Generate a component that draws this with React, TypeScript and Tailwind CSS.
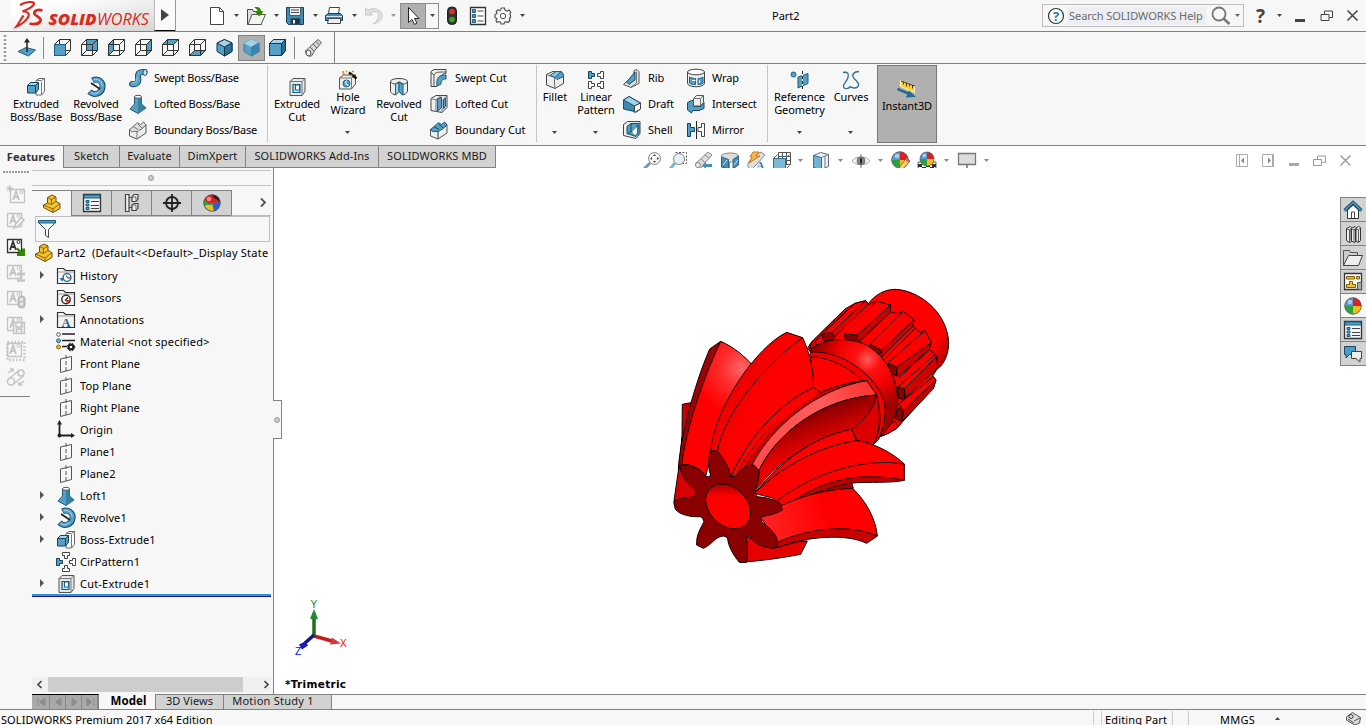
import React from "react";

type Kids = { children?: React.ReactNode };
type IconProps = Kids & { w?: number; h?: number; className?: string };

const K = "#444b50";
const B = "#559fc6";
const D = "#1c5f86";
const L = "#a5d3ea";

function I({ w = 20, h = 20, className = "", children }: IconProps) {
  return (
    <svg width={w} height={h} viewBox={`0 0 ${w} ${h}`} className={`shrink-0 overflow-visible ${className}`} fill="none" stroke={K} strokeWidth="1">
      {children}
    </svg>
  );
}

function Caret({ c = "#444" }: { c?: string }) {
  return (
    <svg width="5" height="3" viewBox="0 0 5 3" className="shrink-0">
      <path d="M0 0h5L2.500 3z" fill={c} />
    </svg>
  );
}

function Logo() {
  return (
    <svg width="143" height="31" viewBox="0 0 143 31">
      <defs>
        <linearGradient id="lg" x1="0" y1="0" x2="1" y2="1">
          <stop offset="0.2" stopColor="#fff" />
          <stop offset="1" stopColor="#d6d6d6" />
        </linearGradient>
      </defs>
      <rect width="143" height="31" fill="url(#lg)" />
      <g fill="none" stroke="#da291c" strokeWidth="2.100">
        <path d="M9 5C14 2 24 .5 23 4C21.500 7 15.500 10 11.500 11.500C17 11 19.500 14 16.500 18C14 22 9 25 5.500 26.500C8.500 22.500 10 18.500 12.500 15.500" />
        <path d="M31.500 10.500C26.500 9 22.500 11 23.500 14C25.500 16.500 31 18 29.500 21C27.500 24.500 22.500 24.500 18.500 23.500" strokeWidth="2.700" />
      </g>
      <text x="37.500" y="25" fontFamily="Open Sans, sans-serif" fontSize="15.500" fontStyle="italic" fontWeight="800" fill="#da291c" textLength="48" lengthAdjust="spacingAndGlyphs">SOLID</text>
      <text x="86" y="25" fontFamily="Open Sans, sans-serif" fontSize="15.500" fontStyle="italic" fontWeight="400" fill="#da291c" textLength="52" lengthAdjust="spacingAndGlyphs">WORKS</text>
    </svg>
  );
}

function Cube({ face }: { face: number }) {
  const faces = [
    "M1.500 6.500h11v11h-11z",
    "M6.500 1.500h11v11h-11z",
    "M1.500 6.500l5-5v11l-5 5z",
    "M12.500 6.500l5-5v11l-5 5z",
    "M1.500 6.500l5-5h11l-5 5z",
    "M1.500 17.500l5-5h11l-5 5z",
  ];
  return (
    <I w={19} h={19}>
      <path d={faces[face]} fill={B} stroke={D} />
      <path d="M1.500 6.500h11v11h-11zM6.500 1.500h11v11h-11zM1.500 6.500l5-5M12.500 6.500l5-5M12.500 17.500l5-5M1.500 17.500l5-5" stroke="#333" />
      {face === 0 && <path d="M1.500 6.500h11v11h-11z" fill={B} stroke={D} />}
    </I>
  );
}

function IsoCube({ r = 0 }: { r?: number }) {
  return r === 2 ? (
    <I w={19} h={19}>
      <path d="M1.500 5.500l4-4h12v11l-4 5h-12z" fill={B} stroke="#17374a" />
      <path d="M1.500 5.500l4-4h12l-4 4z" fill={L} stroke="#17374a" />
      <path d="M13.500 5.500l4-4v11l-4 5z" fill="#2b7199" stroke="#17374a" />
    </I>
  ) : (
    <I w={19} h={19}>
      <path d="M2 5l7.500-3.500L17 5v8.500L9.500 18 2 13.500z" fill={B} stroke={r ? "#3f7c9d" : "#17374a"} />
      <path d="M2 5l7.500-3.500L17 5 9.500 9z" fill={L} stroke={r ? "#8cc3df" : "#17374a"} />
      <path d="M9.500 9L17 5v8.500L9.500 18z" fill={r ? "#3b84ab" : "#2b7199"} stroke={r ? "#3b84ab" : "#17374a"} />
    </I>
  );
}

const ExtrudeIcon = () => (
  <I>
    <path d="M10 3.500l3-2h5.500v13l-3 3.500H10z" fill="#fff" stroke="#666" />
    <path d="M15.500 4.500v13.500M10 3.500h5.500l3-2" stroke="#777" />
    <path d="M1.500 8.500l3-3h8v7l-3 3.500h-8z" fill={B} stroke="#17435e" />
    <path d="M1.500 8.500l3-3h8l-3 3z" fill={L} stroke="#17435e" />
    <path d="M9.500 8.500V16" stroke="#17435e" />
  </I>
);
const RevolveIcon = () => (
  <I>
    <path d="M6.500 3.500C12 .5 17.500 5 16.500 10.500C15.500 17 8 19 3.500 14.500" stroke="#1c4d68" strokeWidth="6" />
    <path d="M7 3.500C12 1 17 5 16.300 10.500C15.300 16.500 8 18.500 4 15" stroke="#559fc6" strokeWidth="4.200" />
    <path d="M8 2.500C13 1.500 16.500 5 16 9M5 15.500C8 18 12 16.500 14 14" stroke={L} strokeWidth="1" />
    <path d="M5 6l9 6" stroke="#222" strokeWidth="1.600" />
  </I>
);
const LoftIcon = () => (
  <I>
    <path d="M6.500 3v7L2 15l8 4.500L18 14l-4.500-4V3z" fill={B} stroke="#295a75" />
    <path d="M10 4v15l8-5-4.500-4V3z" fill="#37809f" stroke="none" />
    <ellipse cx="10" cy="2.800" rx="3.500" ry="1.500" fill="#fff" stroke="#555" />
  </I>
);
const SweptIcon = () => (
  <I>
    <path d="M4 16c6 1 7-3 6-6.500C9.500 5 12 3.500 16.500 4" stroke="#1f4f69" strokeWidth="6" strokeLinecap="round" />
    <path d="M4 16c6 1 7-3 6-6.500C9.500 5 12 3.500 16.500 4" stroke="#59a7cd" strokeWidth="4" strokeLinecap="round" />
    <ellipse cx="17" cy="4.500" rx="2" ry="3" fill="#c6e4f2" stroke="#1f4f69" />
    <path d="M4 14.500c4 .5 5-2 4.500-5" stroke={L} />
  </I>
);
const BoundaryIcon = ({ blue = false }: { blue?: boolean }) => (
  <I>
    <path d="M1.500 9.500c3 1 4-1 7-.5s5-1 6-4c1-1 2.500-1 3.500 0v8l-9 6-7.500-3z" fill="#eee" stroke="#555" />
    <path d="M1.500 9.500L7 5c1-2 3-3 4.500-1s2.500-1.500 4-2l2.500 3-5 4.500c-2 0-3 3-5 2-2-.5-4 1.500-6.500-2z" fill={blue ? B : "#ddd"} stroke={blue ? "#174b68" : "#666"} />
    <path d="M9 11.500V19M5 6.500l5 3M10 4l4 4" stroke={blue ? "#174b68" : "#777"} />
  </I>
);
const CutIcon = () => (
  <I>
    <path d="M3 4.500l3-3h12v13l-3 4H3z" fill="#e6e6e6" stroke="#555" />
    <path d="M3 4.500h12l3-3M15 4.500v14" stroke="#777" />
    <path d="M6 7.500h7v8H6z" fill="#b8dced" stroke={D} strokeWidth="1.200" />
    <path d="M8.500 8h4v5h-4z" fill="#fff" stroke={D} />
  </I>
);
const HoleIcon = () => (
  <I>
    <path d="M1.500 8l4-3h12v9l-4 5h-12z" fill="#eee" stroke="#555" />
    <path d="M1.500 8h12v11M13.500 8l4-3" stroke="#777" />
    <circle cx="8.500" cy="13.500" r="3.500" fill={B} stroke={D} />
    <path d="M8.500 10.500a3 3 0 0 0 2 5" stroke="#fff" />
    <path d="M11 2.500l7.500 6" stroke="#111" strokeWidth="2.600" />
    <path d="M4 2h2M8.500.5v2M14 1.500h2M12.500 5l2 .5M4.500 4.500l2-1" stroke="#d48e22" strokeWidth="1.400" />
  </I>
);
const RevCutIcon = () => (
  <I>
    <path d="M1.500 4.500c0-4 17-4 17 0v10c-1 2-3 3-5 3.500L10 14l-3.500 4c-2-.5-4-1.500-5-3.500z" fill="#eee" stroke="#444" />
    <path d="M10 5v9.500L6.500 18V7z" fill={L} stroke={D} />
    <path d="M10 5v9.500l4 3.500V7z" fill={B} stroke={D} />
    <path d="M1.500 4.500c1 2 3 2.500 5 2.500L10 5l4 2c2 0 4-.5 4.500-2.500" />
  </I>
);
const SweptCutIcon = () => (
  <I>
    <path d="M2 3.500l3-2h12v4c-5 0-6 4-6 9l-3 4H2z" fill="#eee" stroke="#444" />
    <path d="M5 18V7c1-3 4-3 12-3M5 7l-3-2.500" stroke="#555" />
    <path d="M8 18c-1-9 2-11 9-11v4c-4 0-5 2-5 5z" fill={B} stroke={D} />
  </I>
);
const LoftCutIcon = () => (
  <I>
    <path d="M2 4.500l5-3h11v12l-5 5-11-2z" fill="#eee" stroke="#444" />
    <path d="M2 4.500l5 1.500v11.500M7 6l5-4.500M13 6.500v12M13 6.500l5-5" stroke="#777" />
    <path d="M8.500 5l4-2v10.500l-4 4zM14.500 6l2-2v8l-2 3z" fill={B} stroke={D} />
  </I>
);
const FilletIcon = () => (
  <I>
    <path d="M1.500 4.500L8 1.500h8c1.500 1 2.500 3 2.500 5v7L10 18.500l-8.500-3.500z" fill="#eee" stroke="#444" />
    <path d="M1.500 4.500L10 7.500c-1 3-.5 7 0 11" stroke="#666" />
    <path d="M10 7.500L15 1.500c2.500.5 3.500 3 3.500 5L12 9.500z" fill={B} stroke={D} />
    <path d="M5 5.500L11 1.500h5l-6 6z" fill="#8cc6e2" stroke={D} />
  </I>
);
const teeD = "M.5.5h3v2h3v3h-3v2h-3z";
const teeRD = "M6.500.5h-3v2h-3v3h3v2h3z";
function Tee({ x, y, blue = false, right = false }: { x: number; y: number; blue?: boolean; right?: boolean }) {
  return <path transform={`translate(${x} ${y})`} d={right ? teeRD : teeD} fill={blue ? B : "#fff"} stroke={blue ? "#15425d" : "#444"} />;
}
const LinearIcon = () => (
  <I>
    <Tee x={2} y={1} blue />
    <Tee x={11} y={1} right />
    <Tee x={2} y={11} />
    <Tee x={11} y={11} right />
  </I>
);
const RibIcon = () => (
  <I>
    <path d="M12 2.500l3-1 2 2v12l-8 4-7.500-3 3-3 7.500-3z" fill="#e6e6e6" stroke="#555" />
    <path d="M4.500 14l8.500-10v8l-6 4.500z" fill={B} stroke="#174b68" />
    <path d="M14.500 3.500V15l-5.500 4" stroke="#777" />
  </I>
);
const DraftIcon = () => (
  <I>
    <path d="M1.500 6L7 2.500 18.500 9v6l-4 3-13-3z" fill="#3c88b0" stroke="#174b68" />
    <path d="M1.500 6L7 2.500 18.500 9l-6 3z" fill={L} stroke="#174b68" />
    <path d="M12.500 12l6-3v6l-6 3.500z" fill="#fff" stroke="#444" />
  </I>
);
const ShellIcon = () => (
  <I>
    <path d="M1.500 4.500l4-3H18v12l-4 5-12.500-3z" fill="#eee" stroke="#444" />
    <path d="M5 6.500l4-3h8v10l-3 3-9-3z" fill={B} stroke="#174b68" />
    <path d="M9 3.500v8l-4 2.500M9 11.500l6 2V5" stroke="#174b68" />
    <path d="M10 12l5-5v6l-2 2z" fill="#fff" stroke="none" />
  </I>
);
const WrapIcon = () => (
  <I>
    <path d="M1.500 4v11c0 5 17 5 17 0V4" fill="#eee" stroke="#444" />
    <ellipse cx="10" cy="4" rx="8.500" ry="2.800" fill="#fff" stroke="#444" />
    <path d="M3.500 9c3 1.500 5 1.500 6 1.500v6c-3 0-5-.5-6-1.500zM12 10.500c2 0 4-.5 5-1.500v6c-1 1-3 1.500-5 1.500z" fill={B} stroke={D} />
    <path d="M6 12.500h3.500M13.500 12v3" stroke="#fff" />
  </I>
);
const IntersectIcon = () => (
  <I>
    <path d="M1.500 8.500l4-2H8v6h7l3-4v6l-5 2h-6l-1.500 2.500-4-3z" fill={B} stroke="#174b68" />
    <path d="M7.500 4.500l3-3h7v7l-3 3.500h-7z" fill="#eee" stroke="#555" />
    <path d="M7.500 4.500h7V12M14.500 4.500l3-3" stroke="#777" />
  </I>
);
const MirrorIcon = () => (
  <I>
    <path d="M1.500 3.500h3v4h4v4h-4v5h-3z" fill={B} stroke="#17435e" />
    <path d="M18.500 3.500h-3v4h-3.500v4h3.500v5h3z" fill="#fff" stroke="#444" />
    <path d="M10.500 1v18" stroke="#222" />
  </I>
);
const RefGeoIcon = () => (
  <I>
    <circle cx="3.500" cy="4.500" r="2.500" fill={B} stroke={D} />
    <path d="M8 7l10-3.500v10L8 18z" fill={B} stroke={D} />
    <path d="M12.500 1v19" stroke="#fff" />
    <path d="M12.500 1v19" stroke="#222" strokeDasharray="3 2" />
  </I>
);
const CurvesIcon = () => (
  <I>
    <path d="M2 2.500c5-1 6 1 5 5s-5 6-4.500 9 5 2.500 7 0M18 1.500c-5 0-8 3-5 7 3 3 6 5 4 8-1.500 1.500-5 2.500-7.500 0" stroke="#2a7099" strokeWidth="1.300" />
  </I>
);
const InstantIcon = () => (
  <I w={22} h={22}>
    <path d="M4.500 2.500l14 5v7l-14-6z" fill="#ffd02e" stroke="#fff3b5" />
    <path d="M5 3l14 5M7.500 4v2.500M10.500 5v3.500M13.500 6v2.500M16.500 7v3.500" stroke="#333" />
    <path d="M1.500 11l12 5" stroke="#246b95" strokeWidth="2.500" />
    <path d="M13 12.500l7 6.500-10 .5z" fill="#246b95" stroke="none" />
  </I>
);

function Big({ icon, lines, low = false, arrow = false, className }: { icon: React.ReactNode; lines: string[]; low?: boolean; arrow?: boolean; className: string }) {
  return (
    <div className={`flex h-[78px] flex-col items-center text-center ${low ? "pt-[13px]" : "pt-[6px]"} ${className}`}>
      <div className="flex h-5 items-center">{icon}</div>
      <div className="flex h-[27px] flex-col leading-[13px] whitespace-nowrap">
        {lines.map((l) => (
          <span key={l}>{l}</span>
        ))}
      </div>
      {arrow && <div className="pt-[14px] pr-px"><Caret /></div>}
    </div>
  );
}

function Stack({ items, className }: { items: [React.ReactNode, string][]; className: string }) {
  return (
    <div className={`flex flex-col ${className}`}>
      {items.map(([ic, t]) => (
        <div key={t} className="flex h-[26px] items-center gap-[6px] whitespace-nowrap">
          {ic}
          <span>{t}</span>
        </div>
      ))}
    </div>
  );
}

const PartIcon = () => (
  <I>
    <path d="M1.500 11l4-2V3.500l4.500-2.500 4 2v4.500l4 2v5L11 18.500l-9.500-5z" fill="#f4c22b" stroke="#6b4d0d" />
    <path d="M5.500 3.500l4 2L14 3M9.500 5.500v5l4.500-3M1.500 11l9.500 4 7-5.500M11 15v3.500M5.500 9l4 1.500" stroke="#8a6510" />
  </I>
);
const ListIcon = () => (
  <I>
    <path d="M1.500 1.500h17v17h-17z" fill="#f4f4f4" stroke="#333" strokeWidth="1.300" />
    <path d="M2 2h16v3H2z" fill={B} stroke={D} />
    <path d="M4 7.500h3v2H4zM4 11h3v2H4zM4 14.500h3v2H4z" fill={B} stroke={D} />
    <path d="M9 8.500h8M9 12.500h8M9 15.500h8" stroke="#444" />
  </I>
);
const ConfigIcon = () => (
  <I>
    <path d="M3.500 1.500h3.500v17H3.500zM7 4.500h4M7 14.500h4" fill="#eee" stroke="#444" strokeWidth="1.200" />
    <path d="M10 4l2-2.500h4V6l-2 2.500h-4zM10 12l2-1.500h4V15l-2 2.500h-4z" fill="#eee" stroke="#444" strokeWidth="1.200" />
    <path d="M10 4h4v4M10 12h4v5" stroke="#666" />
  </I>
);
const TargetIcon = () => (
  <I>
    <circle cx="10" cy="10" r="6" stroke="#222" strokeWidth="1.800" />
    <path d="M10 1v18M1 10h18" stroke="#222" strokeWidth="1.800" />
  </I>
);
function Ball({ eye = false }: { eye?: boolean }) {
  return (
    <g stroke="none">
      <circle cx="10" cy="10" r="8.300" fill="#2aa13a" />
      <path d="M10 10V1.700A8.300 8.300 0 0 1 18.300 10z" fill="#d92222" />
      <path d="M10 10V1.700A8.300 8.300 0 0 0 1.700 10z" fill={eye ? "#e01f1f" : "#5d95d6"} />
      <path d="M10 10v8.300A8.300 8.300 0 0 0 18.300 10z" fill="#f0bd20" />
      {eye && <path d="M2 7l8 5v6.300C4 18 1 13 2 7z" fill="#2aa13a" />}
      {eye && <path d="M3 12l7 0 3 6C8 19 4 16 3 12z" fill="#f0bd20" />}
      {eye && <path d="M10 10l8-1c1 5-3 9-6 9.200z" fill="#2b63c8" />}
      {eye && <path d="M10 1.700C15 1.500 18 5 18.300 9L11 4z" fill="#2b1717" />}
      <circle cx="7" cy="6" r="2.300" fill="#fff" opacity=".5" />
      <circle cx="10" cy="10" r="8.300" fill="none" stroke="#555" strokeWidth=".8" />
    </g>
  );
}
const BallIcon = ({ eye = false }: { eye?: boolean }) => (
  <I>
    <Ball eye={eye} />
  </I>
);

const folder = <path d="M1.500 17.500v-15h6l2 2h9v13z" fill="#f3f3f3" stroke="#333" strokeWidth="1.200" />;
const PlaneIcon = () => (
  <I>
    <path d="M4.500 5l11-2.500v13l-11 3z" stroke="#555" />
    <path d="M10 1v18" stroke="#555" strokeDasharray="4 2" />
  </I>
);
const HistoryIcon = () => (
  <I>
    {folder}
    <path d="M2 6h16" stroke="#999" />
    <circle cx="11" cy="11.500" r="3.900" fill="#fff" stroke="#2b7298" strokeWidth="1.500" />
    <path d="M10.500 9.500l1 2.500h3" stroke="#333" />
    <path d="M3.500 12h5L6 15.500z" fill="#2b7298" stroke="none" />
  </I>
);
const SensorIcon = () => (
  <I>
    {folder}
    <path d="M2 6h16" stroke="#999" />
    <circle cx="10" cy="11.500" r="4.200" fill="#fff" stroke="#333" strokeWidth="1.500" />
    <path d="M9 12.500l3-3" stroke="#222" strokeWidth="1.300" />
    <path d="M10 12h3.500a3.500 3.500 0 0 1-3 3z" fill="#dc2a1c" stroke="none" />
  </I>
);
const AnnoIcon = () => (
  <I>
    {folder}
    <path d="M2 6h16" stroke="#999" />
    <text x="10" y="16.500" textAnchor="middle" fontFamily="Liberation Serif, serif" fontWeight="700" fontSize="12.500" fill="#1c6390" stroke="none">A</text>
  </I>
);
const MaterialIcon = () => (
  <I>
    <path d="M6 2h13M6 8.500h13M6 14.500h5" stroke="#222" strokeWidth="1.600" />
    <circle cx="2.500" cy="2.500" r="1.800" fill="#fff" stroke="#555" />
    <circle cx="2.500" cy="8.800" r="2" fill="#6db4d8" stroke="#30688a" />
    <circle cx="2.500" cy="15" r="2" fill="#f0b92a" stroke="#8f6b12" />
    <circle cx="15" cy="15" r="2.400" stroke="#222" strokeWidth="2.200" />
    <circle cx="15" cy="15" r="3.800" stroke="#222" strokeWidth="1" strokeDasharray="1.600 1.500" />
  </I>
);
const OriginIcon = () => (
  <I>
    <path d="M3.500 3v12.500H16" stroke="#222" strokeWidth="1.800" />
    <path d="M3.500 0L6 4.500H1zM19 15.500l-4-2.500v5z" fill="#222" stroke="none" />
    <circle cx="3.500" cy="15.500" r="2" fill="#222" stroke="none" />
  </I>
);
const CirIcon = () => (
  <I>
    <Tee x={0} y={6} blue />
    <Tee x={13} y={6} right />
    <path d="M6.500.5h7v3h-2v3h-3v-3h-2zM6.500 19.500h7v-3h-2v-3h-3v3h-2z" fill="#fff" stroke="#444" />
  </I>
);

const tree: { t: string; i: React.ReactNode; x?: boolean; s?: string }[] = [
  { t: "History", i: <HistoryIcon />, x: true },
  { t: "Sensors", i: <SensorIcon /> },
  { t: "Annotations", i: <AnnoIcon />, x: true },
  { t: "Material <not specified>", i: <MaterialIcon />, s: "tracking-[0.220px]" },
  { t: "Front Plane", i: <PlaneIcon /> },
  { t: "Top Plane", i: <PlaneIcon /> },
  { t: "Right Plane", i: <PlaneIcon /> },
  { t: "Origin", i: <OriginIcon /> },
  { t: "Plane1", i: <PlaneIcon /> },
  { t: "Plane2", i: <PlaneIcon /> },
  { t: "Loft1", i: <LoftIcon />, x: true },
  { t: "Revolve1", i: <RevolveIcon />, x: true },
  { t: "Boss-Extrude1", i: <ExtrudeIcon />, x: true },
  { t: "CirPattern1", i: <CirIcon /> },
  { t: "Cut-Extrude1", i: <CutIcon />, x: true, s: "tracking-[0.200px]" },
];

function NoteIcon({ kind }: { kind: number }) {
  const on = kind === 2;
  const c = on ? "#333" : "#c4c4c4";
  if (kind === 7)
    return (
      <I>
        <g stroke="#c4c4c4" strokeWidth="1.500">
          <circle cx="5" cy="14.500" r="3.500" />
          <circle cx="15" cy="6" r="3" />
          <path d="M2.500 12L12.500 4M7.500 17l10-8M2 6l5-4M4 2h3v3M18 14l-5 4M16.500 18H13v-3" />
        </g>
      </I>
    );
  return (
    <I>
      <path d={kind === 0 ? "M4.500 4.500h14v13h-14z" : "M1.500 2.500h14v13h-14z"} stroke={c} strokeWidth="1.300" fill={on ? "#fff" : "none"} />
      <path d={kind === 0 ? "M7 15l3-8.500L13 15M8 12h4" : "M4 13L7 4.500 10 13M5 10h4"} stroke={c} strokeWidth="1.800" />
      <circle cx={kind === 0 ? 15.500 : 12.500} cy={kind === 0 ? 7 : 5} r="1.500" stroke={c} />
      {kind === 0 && <path d="M3.500 0v7M0 3.500h7M1 1l5 5M6 1L1 6" stroke={c} />}
      {kind === 1 && <path d="M8 17l1.500-4 6-6.500 2.500 2.500-6.500 6.500z" fill="#f7f7f7" stroke={c} strokeWidth="1.500" />}
      {on && <path d="M11.500 10.500l4.500 4v-3h3v7.500h-8v-3h3l-4-4z" fill="#2e8b00" stroke="none" />}
      {kind === 3 && <path d="M11 11h8M15 7v8M11 17.500h8" stroke={c} strokeWidth="2.500" />}
      {kind === 4 && <rect x="12" y="7" width="7" height="12" rx="3" fill="#c4c4c4" stroke="#b5b5b5" />}
      {kind === 4 && <path d="M14 10.500h3M14 15h3" stroke="#eee" strokeWidth="2" />}
      {kind === 5 && <path d="M7.500 7.500h11v11h-11zM10 8v4h6V8M10.500 18v-4h5v4" fill="#eee" stroke={c} strokeWidth="1.400" />}
      {kind === 6 && <path d="M1.500 1h17v18h-17z" stroke={c} strokeWidth="2.500" strokeDasharray="1.500 2" />}
    </I>
  );
}

function Part() {
  return (
    <svg width="300" height="290" viewBox="0 0 900 870" className="absolute top-[112px] left-[386px]" stroke="#100" strokeWidth="3" strokeLinejoin="round" fill="#f00">
      <defs>
        <linearGradient id="endg" x1="640" y1="100" x2="860" y2="210" gradientUnits="userSpaceOnUse">
          <stop offset="0" stopColor="#f00" />
          <stop offset=".85" stopColor="#f00" />
          <stop offset="1" stopColor="#c40000" />
        </linearGradient>
        <radialGradient id="collar" cx="622" cy="238" r="150" gradientUnits="userSpaceOnUse">
          <stop offset="0" stopColor="#ff5a5a" />
          <stop offset=".25" stopColor="#ff1010" />
          <stop offset=".6" stopColor="#f00000" />
          <stop offset="1" stopColor="#a00000" />
        </radialGradient>
        <radialGradient id="ba" cx="245" cy="265" r="140" gradientUnits="userSpaceOnUse">
          <stop offset="0" stopColor="#ff6868" />
          <stop offset=".4" stopColor="#ff3030" />
          <stop offset="1" stopColor="#f00" />
        </radialGradient>
        <linearGradient id="bb" x1="230" y1="320" x2="430" y2="440" gradientUnits="userSpaceOnUse">
          <stop offset="0" stopColor="#ee0000" />
          <stop offset=".35" stopColor="#f00" />
        </linearGradient>
        <linearGradient id="bc" x1="460" y1="380" x2="500" y2="490" gradientUnits="userSpaceOnUse">
          <stop offset="0" stopColor="#7c0000" />
          <stop offset="1" stopColor="#e80000" />
        </linearGradient>
        <linearGradient id="strip" x1="620" y1="310" x2="290" y2="560" gradientUnits="userSpaceOnUse">
          <stop offset="0" stopColor="#f33" />
          <stop offset=".35" stopColor="#ff5c5c" />
          <stop offset="1" stopColor="#ff4a4a" />
        </linearGradient>
        <linearGradient id="be" x1="330" y1="740" x2="600" y2="660" gradientUnits="userSpaceOnUse">
          <stop offset="0" stopColor="#ff2020" />
          <stop offset=".6" stopColor="#f00" />
        </linearGradient>
        <linearGradient id="bore" x1="150" y1="630" x2="240" y2="720" gradientUnits="userSpaceOnUse">
          <stop offset="0" stopColor="#a00000" />
          <stop offset=".35" stopColor="#f00" />
          <stop offset="1" stopColor="#f00" />
        </linearGradient>
      </defs>
      <path d="M622 75C645 42 678 28 705 28C775 30 862 95 866 188C866 225 850 255 833 266L700 300z" fill="url(#endg)" />
      <path d="M442 205L453 188L555 87L585 70L617 62L626 73L650 64L692 75L690 96L712 101L730 93L762 120L758 138L782 158L795 152L814 188L806 205L830 230L833 264L818 288L828 300L820 325L728 425L710 446L685 460L660 470L560 330z" />
      <path d="M453 188L555 87L560 92L466 184L470 196L450 208z" fill="#d80000" />
      <path d="M487 162L585 70L617 62L515 158z" />
      <path d="M515 158L617 62L626 73L522 172z" fill="#e40000" />
      <path d="M487 162L515 158L524 170L514 185L490 181z" fill="#9b0000" />
      <path d="M553 161L650 64L692 75L592 166z" />
      <path d="M592 166L692 75L690 98L592 186z" fill="#cf0000" />
      <path d="M553 161L592 166L592 186L556 179z" fill="#8d0000" />
      <path d="M598 186L690 98" fill="none" />
      <path d="M630 193L730 94L762 120L664 211z" />
      <path d="M664 211L762 120L758 140L664 232z" fill="#cf0000" />
      <path d="M630 193L664 211L658 224L626 207z" fill="#8d0000" />
      <path d="M672 240L768 142" fill="none" />
      <path d="M684 248L795 152L814 188L710 262z" />
      <path d="M710 262L814 188L808 207L712 290z" fill="#cf0000" />
      <path d="M684 248L710 262L709 286L692 281z" fill="#8d0000" />
      <path d="M716 294L808 210" fill="none" />
      <path d="M714 320L824 225L830 230L733 326z" />
      <path d="M733 326L830 230L833 264L736 352z" fill="#d40000" />
      <path d="M714 320L733 326L734 360L716 355z" fill="#8d0000" />
      <path d="M716 372L820 290L828 300L730 392z" />
      <path d="M730 392L828 300L820 326L726 424z" fill="#c60000" />
      <path d="M712 382L730 392L724 425L706 416z" fill="#8d0000" />
      <path d="M660 470L684 438L706 424L715 440L685 460z" />
      <path d="M450 214C480 175 560 168 620 195C690 238 715 310 713 372C710 412 690 440 660 470L560 350z" fill="url(#collar)" />
      <path d="M445 228L455 216C550 212 655 290 674 372C680 408 668 450 656 478L640 494L560 400z" fill="#f20000" />
      <path d="M452 230C560 235 640 320 658 390C664 430 656 464 640 494L575 484L460 325z" />
      <path d="M575 450L650 345C664 400 660 460 640 494L592 482z" fill="#dc0000" />
      <path d="M67 373L92 368L75 470L66 470z" fill="#c80000" />
      <path d="M66 470L57 560L42 662L105 650L108 635L60 555z" fill="#d80000" />
      <path d="M149 207L182 184C128 300 80 440 65 553L55 568C60 480 100 320 149 207z" fill="#a00000" />
      <path d="M182 184C220 200 255 230 277 255C205 350 160 430 155 515L137 590C120 565 95 552 65 553C80 440 128 300 182 184z" fill="url(#ba)" />
      <path d="M482 337C370 395 260 500 228 590L300 570L650 345L620 302C570 308 520 322 482 337z" fill="#d40000" />
      <path d="M137 540L152 500L240 560L285 620L300 680L200 650z" stroke="none" />
      <path d="M380 157L428 173C450 220 462 275 460 322C350 375 262 480 213 590L172 515L152 512C165 380 290 200 380 157z" fill="url(#bb)" />
      <path d="M428 173C300 265 190 410 172 515" fill="none" />
      <path d="M460 322L482 337C375 390 272 490 230 588L213 590C262 480 350 375 460 322z" />
      <path d="M482 337C520 320 570 306 618 301C480 328 345 430 275 556L250 565C300 470 370 395 482 337z" fill="#c80000" />
      <path d="M470 343C380 390 290 480 240 575" fill="none" stroke="#f00" strokeWidth="7" />
      <path d="M620 302L650 345C480 355 345 465 297 572L275 556C340 430 480 325 620 302z" fill="url(#strip)" />
      <path d="M650 345C642 385 612 425 575 448C465 470 360 540 285 632L297 572C345 465 480 355 650 345z" fill="url(#bc)" />
      <path d="M575 448L590 482C470 500 360 565 283 640C360 545 465 468 575 448z" />
      <path d="M590 482C650 490 705 525 733 552V601C600 592 450 625 367 690L340 655L283 640C360 565 470 500 590 482z" />
      <path d="M733 552C600 530 440 590 350 665" fill="none" />
      <path d="M733 601C700 592 640 588 590 592C500 602 430 635 367 690C440 645 510 622 575 609C630 605 690 610 733 601z" fill="#c00000" />
      <path d="M575 609L580 625C480 630 380 670 302 712L367 690C420 650 500 622 575 609z" fill="#a80000" />
      <path d="M578 625C620 665 648 720 652 768C570 735 440 750 353 790L302 712C380 660 480 628 578 625z" fill="url(#be)" />
      <path d="M345 790C440 745 570 730 652 768L620 790C560 760 440 768 350 803z" fill="#c80000" />
      <path d="M258 770L350 803C380 795 420 780 442 783L422 823C360 835 300 843 240 847z" fill="#e60000" />
      <path d="M60 556C90 552 125 565 137 590Q146 592 152 586C143 560 145 535 152 512L172 513C195 540 208 565 212 590Q222 592 229 585C245 565 265 553 280 555Q297 565 297 577C297 605 290 620 279 638Q280 648 290 650C320 652 350 660 362 672L367 690C350 702 325 706 304 710Q302 720 307 729C335 745 353 770 353 790L345 805C315 805 280 790 272 772Q264 766 258 772C265 795 262 830 260 847L238 847C220 825 205 800 203 776Q198 768 190 768C165 770 155 795 130 805L110 795C108 765 122 745 132 725Q130 714 122 710C95 712 60 705 46 688L41 665C55 653 85 655 102 650Q110 645 108 633C85 612 62 590 60 556z" fill="#8b0000" />
      <ellipse cx="204.500" cy="679" rx="76" ry="57" transform="rotate(45 204.500 679)" fill="url(#bore)" />
    </svg>
  );
}

const Sep = () => <div className="mt-px h-[77px] w-px shrink-0 bg-[#c6c6c6]" />;

function TitleBar() {
  return (
    <div className="flex h-8 shrink-0 items-center border-b border-[#828282]">
      <div className="ml-[11px] flex h-full w-[165px] shrink-0 border-r border-[#999]">
        <Logo />
        <div className="flex h-full w-[21px] items-center justify-center border-b border-l border-b-black border-l-[#bbb] bg-[#fafafa]">
          <svg width="8" height="12" viewBox="0 0 8 12"><path d="M0 0l8 6-8 6z" fill="#444" /></svg>
        </div>
      </div>
      <div className="ml-[30px] flex h-full items-center">
        <I className="mr-[8px]"><path d="M4.500 1.500h9l4 4v13h-13z" fill="#fff" stroke="#444" /><path d="M13.500 1.500v4h4" /></I>
        <Caret />
        <I className="mr-[8px] ml-[7px]"><path d="M1.500 3.500h5l1 2h8v13h-14z" fill="#ddd" stroke="#444" /><path d="M2 18.500l4-10h13.500l-4.500 10z" fill="#f3f3f3" stroke="#555" /><path d="M8 1.500c5-1.500 7 1 7 4h2.500l-4.500 5-4-5h2.500c0-2-1-3-3.500-4z" fill="#2e8b00" stroke="none" /></I>
        <Caret />
        <I className="mr-[8px] ml-[6px]"><path d="M1.500 1.500h17v17h-15l-2-2z" fill="#3b8db9" stroke="#173f58" /><path d="M4.500 1.500h11v8h-11z" fill="#f2f2f2" stroke="#555" /><path d="M6 4h8M6 6.500h8" /><path d="M6 12.500h9v6H6z" fill="#17394f" /><path d="M8 14h2v3.500H8z" fill="#fff" stroke="none" /></I>
        <Caret />
        <I className="mr-[8px] ml-[6px]"><path d="M5.500 1.500h10l-1 6h-10z" fill="#fff" stroke="#444" /><path d="M1.500 9.500l3-2h12l2 2v5h-17z" fill="#3b8db9" stroke="#173f58" /><path d="M4.500 12.500h12v5h-13z" fill="#eee" stroke="#444" /><path d="M2 10.500h16" stroke="#cde6f2" /></I>
        <Caret />
        <I className="mr-[7px] ml-[7px] opacity-50"><path d="M1.500 2v7h7L6 7c5-3 10-1 8 5-1 2-2 4-5 6 8-2 11-7 8-12-3-4-9-4-13-2z" fill="#ccc" stroke="#999" /></I>
        <Caret c="#999" />
        <div className="ml-1 flex h-[26px] w-[39px] border border-[#8c8c8c]">
          <div className="flex w-[25px] items-center justify-center border-r border-[#8c8c8c] bg-[#b0b0b0]">
            <I w={14}><path d="M2.500 1.500v15l3.500-3 2.500 5 2.500-1.500-2.500-4.500h4.500z" fill="#fff" stroke="#222" /></I>
          </div>
          <div className="flex flex-1 items-center justify-center"><Caret /></div>
        </div>
        <I className="ml-[3px]"><rect x="5.500" y="1" width="9" height="17.500" rx="4" fill="#333" stroke="#222" /><circle cx="10" cy="5.500" r="2.800" fill="#e5301f" stroke="none" /><circle cx="10" cy="13.500" r="2.800" fill="#3ea321" stroke="none" /></I>
        <I className="ml-[6px]"><path d="M2.500 1.500h15v17h-15z" fill="#fff" stroke="#333" strokeWidth="1.300" /><path d="M4.500 3.500h3v3h-3zM4.500 8.500h3v3h-3zM4.500 13.500h3v3h-3z" fill={B} stroke={D} /><path d="M9.500 5h6M9.500 10h6M9.500 15h6" /></I>
        <I className="mr-[7px] ml-[5px]"><circle cx="10" cy="10" r="2.700" stroke="#555" /><path d="M8.500 2h3l.5 2 2 1 2-1 1.800 2.200-1 1.800.7 1.500v2l-1.200 1 .7 2-2 2-2-.8-1.500.8-.5 1.500h-3l-.6-1.700-1.700-.7-2 .7L3 14.500l1-1.800L2 11.500v-3L4 7.500l-.8-2L5 3.800l2 .9z" stroke="#555" strokeWidth="1.200" /></I>
        <Caret />
      </div>
      <div className="ml-[247px] w-[28px] pt-px text-[11px] whitespace-nowrap text-black">Part2</div>
      <div className="mr-[8px] ml-auto flex items-center">
        <div className="flex h-[23px] w-[202px] items-center border border-[#bdbdbd] pl-1">
          <I w={18} h={18}><circle cx="9" cy="9" r="7.500" fill="#fff" stroke="#333" strokeWidth="1.200" /><text x="9" y="13.500" textAnchor="middle" fontSize="13" fontWeight="700" fontFamily="Open Sans, sans-serif" fill="#2878a6" stroke="none">?</text></I>
          <div className="ml-[2px] w-[139px] bg-[#eceef3] pl-[2px] text-[11px] leading-[18px] tracking-[-0.050px] whitespace-nowrap text-[#6a6a6a]">Search SOLIDWORKS Help</div>
          <I className="ml-[5px]"><circle cx="8" cy="8" r="6.500" stroke="#777" strokeWidth="1.800" /><path d="M12.500 12.500l6 5.500" stroke="#777" strokeWidth="2.600" /></I>
          <div className="ml-[4px]"><Caret c="#666" /></div>
        </div>
        <span className="ml-[12px] w-[10px] font-['Open_Sans'] text-[19px] leading-5 font-bold text-[#444]">?</span>
        <div className="ml-[11px]"><Caret /></div>
        <div className="mt-[10px] ml-[13px] h-[3px] w-[10px] bg-[#444]" />
        <I w={13} h={12} className="ml-[15px]"><path d="M1 4.500h8v6H1zM4.500 4V1h8v6.500H9.500" stroke="#444" /></I>
        <I w={11} h={11} className="ml-[14px]"><path d="M.5.5l10 10M10.500.5l-10 10" stroke="#444" strokeWidth="1.500" /></I>
      </div>
    </div>
  );
}

function ViewBar() {
  return (
    <div className="flex h-8 shrink-0 items-center border-b border-[#828282]">
      <div className="flex h-full w-[335px] items-center border-r border-[#828282]">
        <svg width="4" height="28" className="ml-[3px]"><path d="M2 1v27" stroke="#999" strokeWidth="2.500" strokeDasharray="2 2" /></svg>
        <I className="ml-[10px]"><path d="M1 13.500l8-4 9.500 2.500-7 6z" fill={B} stroke={D} /><path d="M10 2v12" stroke="#222" strokeWidth="1.500" /><path d="M10 0l3 4.500H7z" fill="#222" stroke="none" /></I>
        <div className="mr-[9px] ml-[6px] h-[22px] w-px bg-[#888]" />
        <div className="flex gap-2">
          {[0, 1, 2, 3, 4, 5].map((f) => <Cube key={f} face={f} />)}
        </div>
        <div className="ml-2"><IsoCube /></div>
        <div className="ml-1 flex h-[26px] w-[27px] items-center justify-center border border-[#828282] bg-[#b0b0b0]"><IsoCube r={1} /></div>
        <div className="ml-[3px]"><IsoCube r={2} /></div>
        <div className="mr-[9px] ml-[7px] h-[22px] w-px bg-[#888]" />
        <I><path d="M1.500 13L6 8.500l8-7 3.500 3-7 8.500-3 5c-2.500 1.500-6.500-2-6-5z" fill="#d5d5d5" stroke="#666" /><ellipse cx="4.500" cy="15" rx="2.500" ry="2.800" fill="#eee" stroke="#555" /><path d="M12 3.500l3.500 3.500M9 6l4 4M6 9l4 4" stroke="#666" /></I>
      </div>
    </div>
  );
}

function Ribbon() {
  return (
    <div className="flex h-[82px] shrink-0 border-b border-[#828282] pl-[6px] text-[11px] tracking-[-0.120px] text-black">
      <Big className="w-[60px]" low icon={<ExtrudeIcon />} lines={["Extruded", "Boss/Base"]} />
      <Big className="w-[60px]" low icon={<RevolveIcon />} lines={["Revolved", "Boss/Base"]} />
      <Stack className="w-[141px] pt-px pl-[2px] tracking-[-0.200px]" items={[[<SweptIcon />, "Swept Boss/Base"], [<LoftIcon />, "Lofted Boss/Base"], [<BoundaryIcon />, "Boundary Boss/Base"]]} />
      <Sep />
      <Big className="w-[58px]" low icon={<CutIcon />} lines={["Extruded", "Cut"]} />
      <Big className="w-[44px]" arrow icon={<HoleIcon />} lines={["Hole", "Wizard"]} />
      <Big className="w-[58px]" low icon={<RevCutIcon />} lines={["Revolved", "Cut"]} />
      <Stack className="w-[108px] pt-px pl-px tracking-[-0.050px]" items={[[<SweptCutIcon />, "Swept Cut"], [<LoftCutIcon />, "Lofted Cut"], [<BoundaryIcon blue />, "Boundary Cut"]]} />
      <Sep />
      <Big className="w-[36px] tracking-normal" arrow icon={<FilletIcon />} lines={["Fillet"]} />
      <Big className="w-[46px]" arrow icon={<LinearIcon />} lines={["Linear", "Pattern"]} />
      <Stack className="w-[65px] pt-px pl-[3px] tracking-[-0.050px]" items={[[<RibIcon />, "Rib"], [<DraftIcon />, "Draft"], [<ShellIcon />, "Shell"]]} />
      <Stack className="w-[83px] pt-px pl-[2px] tracking-[-0.150px]" items={[[<WrapIcon />, "Wrap"], [<IntersectIcon />, "Intersect"], [<MirrorIcon />, "Mirror"]]} />
      <Sep />
      <Big className="w-[63px]" arrow icon={<RefGeoIcon />} lines={["Reference", "Geometry"]} />
      <Big className="mr-px w-[40px]" arrow icon={<CurvesIcon />} lines={["Curves"]} />
      <Big className="mt-px ml-[5px] w-[60px] border border-[#777] bg-[#b0b0b0] pt-[10px]" low icon={<InstantIcon />} lines={["Instant3D"]} />
    </div>
  );
}

function Hud() {
  const g = "#888";
  return (
    <div className="ml-[146px] flex items-center">
      <I className="mr-[6px]"><circle cx="12.500" cy="7.500" r="6" fill="#f4f4f4" stroke={g} /><path d="M8 12l-6 6" stroke="#6e9bb4" strokeWidth="3" /><path d="M12.500 3l1.500 2h-3zM12.500 12l1.500-2h-3zM8 7.500l2-1.500v3zM17 7.500l-2-1.500v3z" fill="#444" stroke="none" /></I>
      <I className="mr-[6px]"><path d="M7.500 1.500h11v11h-4" stroke="#555" strokeDasharray="2 1.500" /><circle cx="11" cy="8" r="5.500" fill="#e6eff4" stroke={g} /><path d="M7 12l-5 6" stroke="#7db3cf" strokeWidth="3" /></I>
      <I className="mr-[6px]"><path d="M1.500 12.500L6 8.500l8-7.500 4 3-7 8-4 5c-2.500 1-6-2-5.500-4.500z" fill="#ddd" stroke={g} /><circle cx="4" cy="14" r="2.500" fill="#eee" stroke={g} /><path d="M11 4l4 3M7 8l4 3.500" stroke={g} /><path d="M8 14.500l4-3.500v2h6v3h-6v2z" fill="#438fb8" stroke="none" /></I>
      <I className="mr-[6px]"><path d="M1.500 5c0-4 17-4 17 0v8l-4 4v-6h-5v7l-8-2z" fill="#ddd" stroke={g} /><path d="M1.500 6l7 2.500v9l-7-1.500zM13 8.500l5.500-3.500v9l-5.500 3.500z" fill="#438fb8" stroke="#34647d" /><path d="M3 14l4-5M14 14l4-5" stroke="#c2e1ef" /></I>
      <I className="mr-[6px]"><path d="M2 12L8 5l7-4 4 3-8 9-5 5c-2 1-5-2-4-6z" fill="#ddd" stroke={g} /><path d="M7 1h6l-3 4h4L3 12l3-6H4z" fill="#f2b74b" stroke="#c57a25" /><text x="10" y="18.500" fontFamily="Liberation Serif, serif" fontWeight="700" fontSize="12" fill="#3580ab" stroke="none">A</text></I>
      <I><path d="M6.500 1.500h12v12h-12zM10.500 1.500v12M14.500 1.500v12M6.500 5.500h12M6.500 9.500h12" stroke="#555" /><path d="M1.500 7.500h12v11h-12z" fill="#7db9d6" stroke="#346f8d" /><path d="M1.500 7.500l4-4M13.500 7.500l4-4M13.500 18.500l4-4" stroke="#555" /></I>
      <div className="mr-[8px] ml-[6px]"><Caret c="#888" /></div>
      <I className="mr-[7px]"><path d="M2.500 4.500l7-3 8 2v12l-7 3-8-2z" fill="#eef3f5" stroke="#667" /><path d="M2.500 4.500l8 2v12l-8-2z" fill="#6fb2d3" stroke="#35708e" /><path d="M10.500 6.500l7-3M14 5v12" stroke="#778" /></I>
      <Caret c="#888" />
      <I className="mr-[7px] ml-[8px]"><path d="M1 10c4-5.500 14-5.500 18 0-4 5-14 5-18 0z" fill="#f3f3f3" stroke="#aaa" /><circle cx="10" cy="10" r="3.900" fill="#888" stroke="#666" /><path d="M10 3v14" stroke="#777" /><path d="M10 7.500v5" stroke="#222" strokeWidth="2" /></I>
      <Caret c="#888" />
      <I className="mr-[6px] ml-[8px]"><g transform="translate(-1 -1)"><Ball /></g><path d="M8 19l1-4 7-8 3 3-7 8z" fill="#f6d269" stroke="#8a6b3a" /><path d="M15 8l3 3" stroke="#d65f5f" strokeWidth="2" /></I>
      <I><path d="M1 11h18v8H1z" fill="#eee" stroke="#666" /><path d="M1 13h4v3H1zM5 16h4v3H5zM13 16h4v3h-4zM15 13h4v3h-4zM9 14h4v2H9z" fill="#333" stroke="none" /><g transform="translate(1.500 -.5) scale(.85)"><Ball /></g></I>
      <div className="mx-[7px]"><Caret c="#888" /></div>
      <I className="mr-[7px] ml-px"><path d="M1.500 2.500h17v11h-17z" fill="#ddd" stroke="#777" strokeWidth="1.300" /><path d="M10 14v4M6 18h8" stroke="#777" strokeWidth="1.600" /></I>
      <Caret c="#888" />
    </div>
  );
}

const tabBase = "flex h-full items-center justify-center whitespace-nowrap";

export default function App() {
  return (
    <div className="flex h-[725px] w-[1366px] flex-col overflow-hidden bg-[#f7f7f7] font-['Noto_Sans','Open_Sans',sans-serif] text-[11px] text-[#1a1a1a]">
      <TitleBar />
      <ViewBar />
      <Ribbon />
      <div className="flex h-[22px] shrink-0 bg-white tracking-[0.100px]">
        <div className={`${tabBase} w-[63px] bg-[#f7f7f7] pr-px text-[11px] font-bold tracking-[0.050px] text-[#333]`}>Features</div>
        {[["Sketch", "w-[56px]"], ["Evaluate", "w-[60px]"], ["DimXpert", "w-[66px]"], ["SOLIDWORKS Add-Ins", "w-[133px]"], ["SOLIDWORKS MBD", "w-[118px] border-r"]].map(([t, w]) => (
          <div key={t} className={`${tabBase} ${w} shrink-0 border-b border-l border-[#828282] bg-[#d2d2d2]`}>{t}</div>
        ))}
        <div className="flex pt-[7px]"><Hud /></div>
        <div className="mr-[15px] ml-auto flex items-center pt-[7px] text-[#999]">
          <I w={13} h={13}><path d="M.5.5h11v12H.5zM3.500 0v13" stroke="#aaa" /><path d="M8 3.500v6L5 6.500z" fill="#888" stroke="none" /></I>
          <I w={13} h={13} className="ml-[13px]"><path d="M.5.5h11v12H.5zM10.500 0v13" stroke="#aaa" /><path d="M6 3.500v6l3-3z" fill="#888" stroke="none" /></I>
          <div className="mt-[8px] ml-[14px] h-[3px] w-[10px] bg-[#aaa]" />
          <I w={13} h={12} className="ml-[14px]"><path d="M.5 4.500h8v6h-8zM4.500 4V1h8v6.500H9.500" stroke="#999" /></I>
          <I w={11} h={11} className="ml-[14px]"><path d="M.5.5l10 10M10.500.5l-10 10" stroke="#999" strokeWidth="1.400" /></I>
        </div>
      </div>

      <div className="flex h-[526px] shrink-0">
        <div className="flex w-8 shrink-0 flex-col">
          <div className="flex h-[229px] w-[30px] flex-col items-center border-b border-[#828282] pl-[2px]">
            <svg width="28" height="4" className="mt-[2px] mb-[11px] shrink-0"><path d="M1 2h27" stroke="#999" strokeWidth="2" strokeDasharray="2 1" /></svg>
            <div className="flex flex-col gap-[6px]">
              {[0, 1, 2, 3, 4, 5, 6, 7].map((k) => <NoteIcon key={k} kind={k} />)}
            </div>
          </div>
        </div>
        <div className="flex w-[239px] shrink-0 flex-col">
          <div className="mt-[2px] flex h-4 items-center justify-center border-y border-[#c4c4c4] pr-px">
            <div className="h-[6px] w-[6px] rounded-full border border-[#999] bg-[#ccc]" />
          </div>
          <div className="mt-1 flex h-[26px] shrink-0">
            <div className="flex w-[39px] items-center justify-center border-t border-[#828282]"><PartIcon /></div>
            {[<ListIcon />, <ConfigIcon />, <TargetIcon />, <BallIcon eye />].map((ic, i) => (
              <div key={i} className="flex w-10 items-center justify-center border border-r-0 border-[#828282] bg-[#d2d2d2]">{ic}</div>
            ))}
            <div className="flex flex-1 items-center justify-end border-b border-l border-b-[#bbb] border-l-[#828282] pr-[4px]">
              <I w={7} h={10}><path d="M1 .5l4 4-4 4" stroke="#555" strokeWidth="1.800" /></I>
            </div>
          </div>
          <div className="ml-[3px] flex h-[26px] w-[235px] shrink-0 items-center border border-[#bdbdbd] pl-px">
            <I><path d="M1.500 3.500l7 7v6l3 2v-8l7-7z" fill="#fff" stroke="#444" /><path d="M1.500 1.500h17v2.500h-17z" fill={B} stroke={D} /></I>
          </div>
          <div className="flex h-[22px] shrink-0 items-center whitespace-pre text-black">
            <div className="mr-[3px] ml-[2px]"><PartIcon /></div>
            <span className="pt-px tracking-[0.220px]">{"Part2  (Default<<Default>_Display State"}</span>
          </div>
          {tree.map((n) => (
            <div key={n.t} className="flex h-[22px] shrink-0 items-center text-black">
              <div className="flex w-6 pl-2">
                {n.x && <svg width="4" height="8" viewBox="0 0 4 8"><path d="M0 0l4 4-4 4z" fill="#555" /></svg>}
              </div>
              <div className="w-6 pt-px">{n.i}</div>
              <span className={`pt-[2px] whitespace-nowrap ${n.s ?? "tracking-[0.100px]"}`}>{n.t}</span>
            </div>
          ))}
          <div className="h-[3px] shrink-0 border-b border-[#1c12a0] bg-[#2e93cf]" />
          <div className="mt-auto mb-[2px] flex h-[15px] items-center bg-[#f0f0f0]">
            <div className="flex w-4 justify-center pr-[2px]"><I w={7} h={9}><path d="M5.500 1L2 4.500 5.500 8" stroke="#444" strokeWidth="1.600" /></I></div>
            <div className="h-full w-[195px] bg-[#cdcdcd]" />
            <div className="flex flex-1 justify-end pr-px"><I w={7} h={9}><path d="M1.500 1L5 4.500 1.500 8" stroke="#444" strokeWidth="1.600" /></I></div>
          </div>
        </div>
        <div className="w-[2px] shrink-0" />
        <div className="relative min-w-0 flex-1 border-l border-[#828282] bg-white">
          <div className="absolute top-[232px] -left-px flex h-[39px] w-[9px] items-center justify-center border border-l-0 border-[#828282] bg-[#f7f7f7]">
            <div className="h-[6px] w-[6px] rounded-full border border-[#999] bg-[#ccc]" />
          </div>
          <Part />
          <svg width="60" height="64" viewBox="0 0 60 64" className="absolute top-[428px] left-[16px]">
            <path d="M24 39V17" stroke="#1c6d1c" strokeWidth="3.500" />
            <path d="M24 13l4 10h-8z" fill="#208a30" />
            <path d="M24 40l18 5" stroke="#c41c1c" strokeWidth="3.500" />
            <path d="M42 41.500l9 6-11 1z" fill="#dd3838" />
            <path d="M24 39l-9 8" stroke="#151580" strokeWidth="3.500" />
            <path d="M15 45.500l3 4-6 4-3-5z" fill="#1818c8" />
            <g fontFamily="Liberation Sans, sans-serif" fontSize="10">
              <text x="20.500" y="12" fill="#080">Y</text>
              <text x="50" y="51" fill="#f00">X</text>
              <text x="5" y="59" fill="#00f">Z</text>
            </g>
          </svg>
          <div className="absolute top-[508px] left-[11px] font-['DejaVu_Sans'] text-[10.500px] leading-4 font-bold tracking-[0.300px] text-black">*Trimetric</div>
          <div className="absolute top-[29px] right-0 flex w-[26px] flex-col border-t border-l border-[#828282] bg-[#d2d2d2] [&>div]:pr-[2px]">
            {[
              <I><path d="M4.500 10v8.500h11V10L10 5z" fill="#fff" stroke="#333" /><path d="M8.500 18v-6h3v6" /><path d="M1.500 10.500L10 2.500l8.500 8" stroke="#174865" strokeWidth="3.300" /><path d="M1.500 10.500L10 2.500l8.500 8" stroke="#4c9dc6" strokeWidth="1.500" /></I>,
              <I><path d="M3.500 4.500l4-2 1 1v14l-2 1-3-2zM8 4.500l4-2 1 1v14l-2 1-3-2zM12.500 4.500l3-2 2 1v13l-2 2-3-2z" fill="#eee" stroke="#333" /><path d="M6.500 6v12M11 6v12M15.500 6v12M3.500 4.500l3 1.500 2-2M8 4.500L11 6l2-2M12.500 4.500l3 1.500 2-2" stroke="#555" /></I>,
              <I><path d="M.5 17.500v-15h6l1 2h7v4" fill="#ccc" stroke="#555" /><path d="M.5 17.500l5-10h14l-4 10z" fill="#eee" stroke="#444" /></I>,
              <I><path d="M1.500 1.500h17v16h-17z" fill="#fff" stroke="#333" strokeWidth="1.300" /><path d="M3.500 4.500h8v2.500h-8zM13.500 4.500h3V7h-3zM6.500 9.500h3v3h3v3H3.500v-3h3z" fill="#f5c22c" stroke="#7b5b0e" /><path d="M14.500 10.500h4v7h-4z" fill="#aaa" stroke="#555" /></I>,
              <BallIcon />,
              <ListIcon />,
              <I><path d="M1.500 2.500h11v8h-6L3 14v-3.500H1.500z" fill="#4a9cc5" stroke="#174865" /><path d="M8.500 7.500h10v7H17V18l-4-3.500H8.500z" fill="#eee" stroke="#444" /></I>,
            ].map((ic, i) => (
              <div key={i} className={`flex h-6 items-center justify-center border-b border-[#828282] ${i === 4 ? "bg-[#f7f7f7]" : ""}`}>{ic}</div>
            ))}
          </div>
        </div>
      </div>

      <div className="flex h-4 shrink-0 border-b border-[#828282] tracking-[0.050px]">
        <div className="ml-8 flex h-full w-[67px] border-t border-r border-t-black border-r-[#828282] bg-[#a9a9a9] pl-[2px]">
          {["M3 3v8M10 3L5 7l5 4z", "M10 3L5 7l5 4z", "M5 3l5 4-5 4z", "M11 3v8M4 3l5 4-5 4z"].map((d, i) => (
            <div key={i} className="flex w-4 items-center justify-center border-r border-[#888]"><I w={14} h={14}><path d={d} fill="#8b8b8b" stroke="#8b8b8b" /></I></div>
          ))}
        </div>
        <div className={`${tabBase} w-[56px] pb-[2px] pl-[3px] text-[11.500px] font-bold text-black`}>Model</div>
        <div className={`${tabBase} w-[68px] border-t border-l border-[#828282] bg-[#d2d2d2] pb-[2px]`}>3D Views</div>
        <div className={`${tabBase} w-[109px] border-x border-t border-[#828282] bg-[#d2d2d2] pr-[9px] pb-[2px] tracking-[0.250px]`}>Motion Study 1</div>
        <div className="flex-1 border-t border-[#828282]" />
      </div>
      <div className="flex h-[15px] shrink-0 items-center text-black">
        <span className="ml-px pt-[5px] tracking-[0.080px] whitespace-nowrap">SOLIDWORKS Premium 2017 x64 Edition</span>
        <div className="mt-px mr-[3px] ml-auto flex h-full items-center">
          <div className="h-full w-[9px] border-r border-l border-[#ccc]" />
          <div className="flex h-full w-[71px] items-center border-r border-[#ccc] pt-[4px] pl-[3px] tracking-[0.150px] whitespace-nowrap">Editing Part</div>
          <div className="h-full w-4 border-r border-[#ccc]" />
          <span className="ml-[31px] w-[55px] pt-[4px] tracking-[0.300px]">MMGS</span>
          <svg width="5" height="3"><path d="M0 3h5L2.500 0z" fill="#444" /></svg>
          <I w={18} h={14} className="ml-[65px]"><path d="M1.500 6l6-4.500 8 5-1 5.500-5 2L1.500 9z" fill="#ddd" stroke="#555" /><circle cx="6" cy="5.500" r="2" stroke="#444" /><path d="M9 10l6-3M3 8l6 4" stroke="#555" /></I>
        </div>
      </div>
    </div>
  );
}
